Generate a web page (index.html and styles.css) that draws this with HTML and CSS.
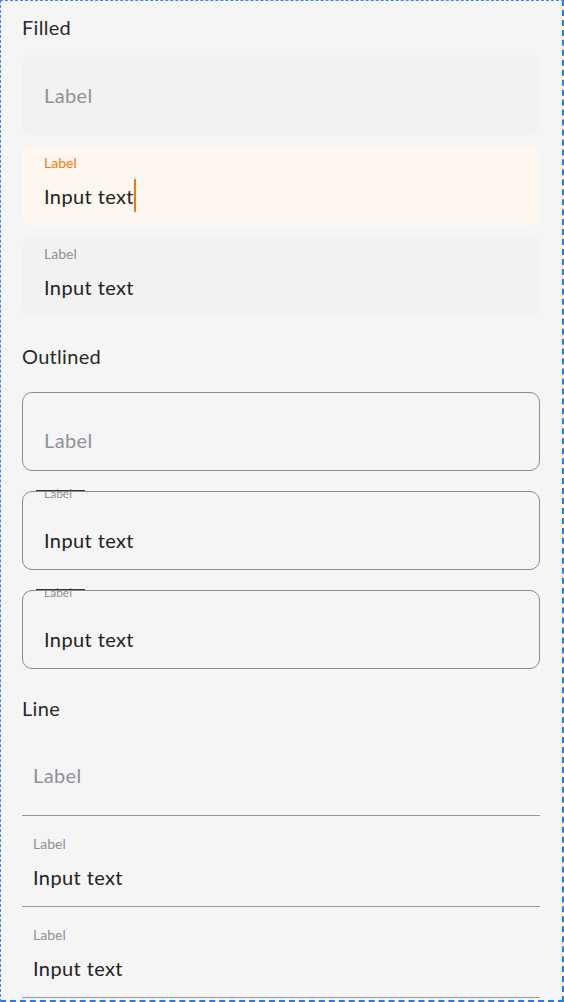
FILE: index.html
```html
<!DOCTYPE html>
<html lang="en">
<head>
<meta charset="utf-8">
<title>Text fields</title>
<link rel="stylesheet" href="styles.css">
</head>
<body>
<div class="frame">
  <h2 class="heading heading-first">Filled</h2>
  <div class="group">
    <div class="field filled">
      <span class="placeholder">Label</span>
    </div>
    <div class="field filled focused">
      <span class="label">Label</span>
      <span class="value">Input text<span class="caret"></span></span>
    </div>
    <div class="field filled">
      <span class="label">Label</span>
      <span class="value">Input text</span>
    </div>
  </div>

  <h2 class="heading heading-outlined">Outlined</h2>
  <div class="group group-outlined">
    <div class="field outlined">
      <span class="placeholder placeholder-low">Label</span>
    </div>
    <div class="field outlined">
      <span class="notch">Label</span>
      <span class="value">Input text</span>
    </div>
    <div class="field outlined">
      <span class="notch">Label</span>
      <span class="value">Input text</span>
    </div>
  </div>

  <h2 class="heading heading-line">Line</h2>
  <div class="group">
    <div class="field line">
      <span class="placeholder placeholder-line">Label</span>
    </div>
    <div class="field line">
      <span class="label">Label</span>
      <span class="value">Input text</span>
    </div>
    <div class="field line">
      <span class="label">Label</span>
      <span class="value">Input text</span>
    </div>
  </div>
</div>
</body>
</html>
```

FILE: styles.css
```css
* { box-sizing: border-box; }

html, body {
  margin: 0;
  padding: 0;
  background: #f5f5f5;
}

body {
  font-family: "Lato", "Noto Sans", sans-serif;
  font-weight: 400;
  color: #222;
}

.frame {
  width: 564px;
  height: 1002px;
  overflow: hidden;
  border-top: 1px dashed #2f8cf5;
  border-left: 1px dashed #2f8cf5;
  border-right: 2px dashed #1f7ef0;
  border-bottom: 2px dashed #1f7ef0;
  padding: 12px 22px 0 21px;
  display: flex;
  flex-direction: column;
}

.heading {
  margin: 25px 0 0;
  font-size: 20px;
  line-height: 28px;
  font-weight: 400;
  letter-spacing: 0.3px;
  color: #2a2a2a;
}
.heading-first { margin-top: 0; margin-bottom: 14px; }
.heading-outlined { margin-bottom: 22px; }
.heading-line { margin-bottom: 14px; }

.group {
  display: flex;
  flex-direction: column;
  gap: 11px;
}
.group-outlined { gap: 20px; }

.field {
  position: relative;
  height: 80px;
  display: flex;
  flex-direction: column;
  padding: 8px 22px 0;
}

.filled {
  background: #f2f2f2;
  border-radius: 10px;
}
.filled.focused {
  background: #fdf7f0;
}

.outlined {
  height: 79px;
  border: 1px solid #8c8c8c;
  border-radius: 10px;
  padding: 34px 21px 0;
}

.line {
  border-bottom: 1px solid #999;
  padding-left: 11px;
}

.placeholder {
  font-size: 20px;
  line-height: 28px;
  letter-spacing: 0.4px;
  color: #8d929a;
  margin-top: 18px;
}
.placeholder-low { margin-top: -1px; }
.placeholder-line { margin-top: 17px; }

.label {
  font-size: 14px;
  line-height: 18px;
  color: #8d929a;
}
.focused .label { color: #f57c00; }

.value {
  font-size: 20px;
  line-height: 28px;
  letter-spacing: 0.4px;
  margin-top: 10px;
  color: #222;
  display: flex;
  align-items: center;
}
.outlined .value { margin-top: 0; }

.caret {
  display: inline-block;
  width: 2px;
  height: 33px;
  margin: -3px 0 -2px 0;
  background: #f27a00;
}

.notch {
  position: absolute;
  top: -5px;
  left: 21px;
  font-size: 12px;
  line-height: 14px;
  color: #8d929a;
}
.notch::before {
  content: "";
  position: absolute;
  top: 3px;
  left: -8px;
  width: 49px;
  height: 1px;
  background: #333;
}
```
